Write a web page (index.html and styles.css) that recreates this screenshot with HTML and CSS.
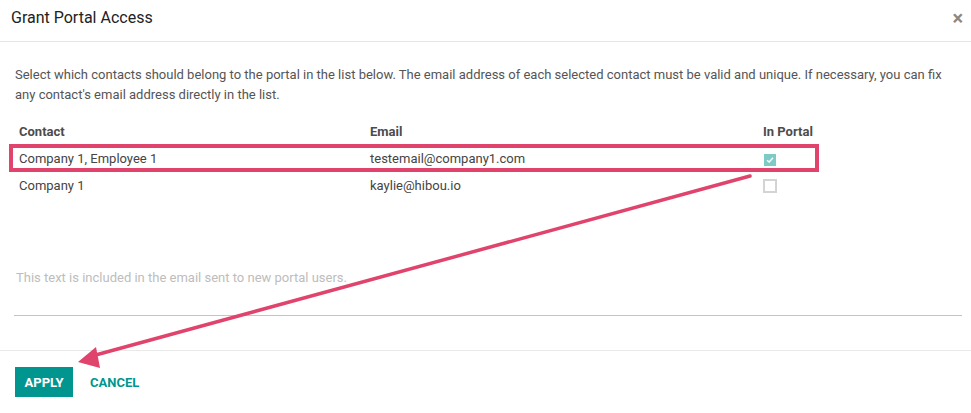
FILE: index.html
```html
<!DOCTYPE html>
<html lang="en">
<head>
  <meta charset="UTF-8" />
  <title>Grant Portal Access</title>
  <link rel="stylesheet" href="styles.css">
</head>
<body>
  <div class="modal">
    <div class="modal-header">
      <h4>Grant Portal Access</h4>
      <span class="close">&times;</span>
    </div>

    <div class="modal-body">
      <p class="intro">Select which contacts should belong to the portal in the list below. The email address of each selected contact must be valid and unique. If necessary, you can fix any contact's email address directly in the list.</p>

      <table class="portal-list">
        <thead>
          <tr>
            <th class="col-contact">Contact</th>
            <th class="col-email">Email</th>
            <th class="col-portal">In Portal</th>
          </tr>
        </thead>
        <tbody>
          <tr>
            <td>Company 1, Employee 1</td>
            <td>testemail@company1.com</td>
            <td><span class="check checked">
              <svg width="8" height="8" viewBox="0 0 8 8"><path d="M1 4.2 L3.2 6 L7 1.8" fill="none" stroke="#fff" stroke-width="1.4"/></svg>
            </span></td>
          </tr>
          <tr>
            <td>Company 1</td>
            <td>kaylie@hibou.io</td>
            <td><span class="check"></span></td>
          </tr>
        </tbody>
      </table>

      <div class="welcome">This text is included in the email sent to new portal users.</div>
    </div>

    <div class="modal-footer">
      <button class="btn-apply">APPLY</button>
      <button class="btn-cancel">CANCEL</button>
    </div>
  </div>

  <!-- annotation drawn over the dialog -->
  <div class="highlight"></div>
  <svg class="arrow" width="971" height="413" viewBox="0 0 971 413">
    <line x1="750" y1="176" x2="92" y2="356" stroke="#e0436b" stroke-width="3.5" stroke-linecap="round"/>
    <polygon points="78,362 96,347 100,368" fill="#e0436b"/>
  </svg>
</body>
</html>
```

FILE: styles.css
```css
* {
  margin: 0;
  padding: 0;
  box-sizing: border-box;
}
body {
  font-family: Roboto, 'Liberation Sans', sans-serif;
  background: #fff;
  color: #4c4c4c;
  font-size: 13px;
  width: 971px;
  height: 413px;
  overflow: hidden;
  position: relative;
}
.modal-header {
  height: 42px;
  display: flex;
  align-items: center;
  justify-content: space-between;
  padding: 0 8px 6px 11px;
  border-bottom: 1px solid #e6e6e6;
}
.modal-header h4 {
  font-size: 16px;
  font-weight: 400;
  color: #222;
}
.close {
  font-size: 20px;
  font-weight: 700;
  color: #888;
  line-height: 1;
}
.modal-body {
  padding: 23px 15px 0 15px;
  height: 309px;
  border-bottom: 1px solid #e9e9e9;
}
.intro {
  line-height: 20px;
  color: #555;
}
.portal-list {
  margin-top: 13px;
  width: 941px;
  border-collapse: collapse;
}
.portal-list th {
  text-align: left;
  font-weight: 700;
  color: #4c4c4c;
  height: 27px;
  padding: 0 4px;
}
.portal-list td {
  height: 27px;
  padding: 0 4px;
  color: #444;
}
.col-contact { width: 351px; }
.col-email { width: 393px; }
.check {
  display: inline-flex;
  align-items: center;
  justify-content: center;
  width: 14px;
  height: 14px;
  border: 2px solid #d4d4d4;
  vertical-align: middle;
}
.check.checked {
  width: 12px;
  height: 12px;
  margin-left: 1px;
  border: none;
  background: #7ecac6;
}
.welcome {
  margin-top: 60px;
  margin-left: -1px;
  margin-right: -6px;
  height: 57px;
  padding: 11px 0 0 2px;
  color: #bdbdbd;
  border-bottom: 1px solid #c4c4c4;
}
.modal-footer {
  display: flex;
  align-items: center;
  padding: 16px 15px;
}
button {
  font-family: Roboto, 'Liberation Sans', sans-serif;
  font-size: 13px;
  font-weight: 700;
  border: none;
  cursor: pointer;
  height: 30px;
}
.btn-apply {
  background: #00968f;
  color: #fff;
  width: 58px;
}
.btn-cancel {
  background: transparent;
  color: #00968f;
  padding: 0 17px;
}
.highlight {
  position: absolute;
  left: 9px;
  top: 144px;
  width: 810px;
  height: 28px;
  border: 4px solid #e0436b;
}
.arrow {
  position: absolute;
  left: 0;
  top: 0;
  pointer-events: none;
}
```
